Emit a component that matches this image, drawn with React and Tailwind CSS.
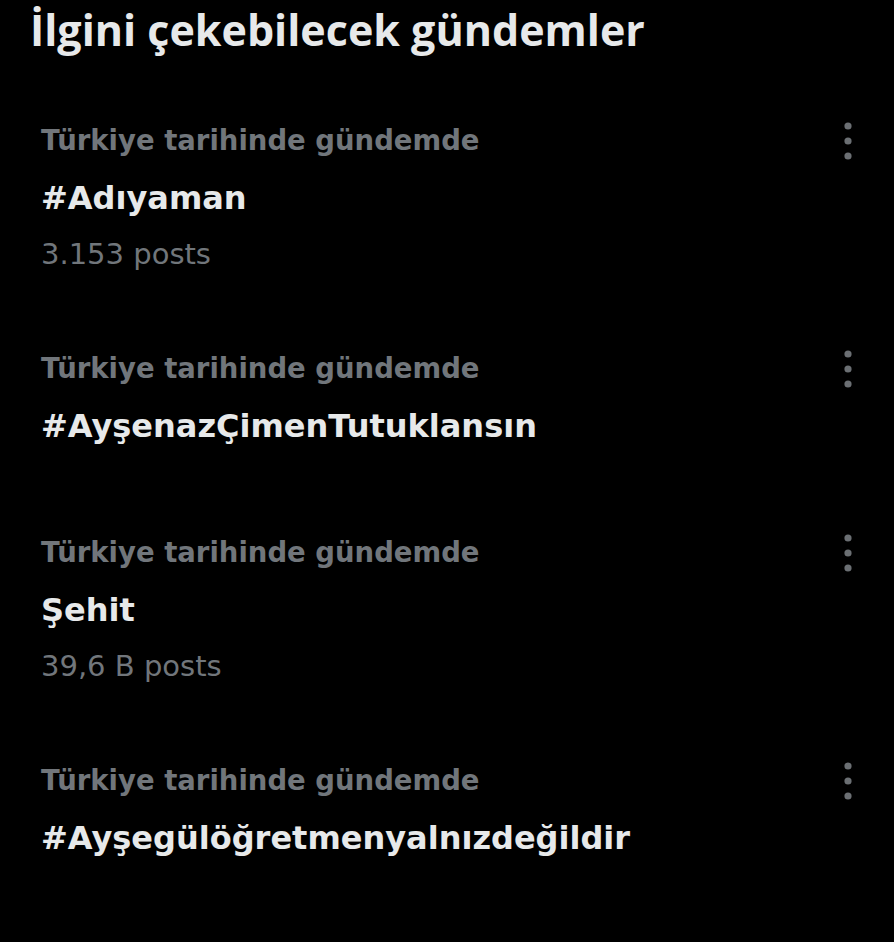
import React from "react";

const items = [
  { label: "Türkiye tarihinde gündemde", trend: "#Adıyaman", posts: "3.153 posts" },
  { label: "Türkiye tarihinde gündemde", trend: "#AyşenazÇimenTutuklansın" },
  { label: "Türkiye tarihinde gündemde", trend: "Şehit", posts: "39,6 B posts" },
  { label: "Türkiye tarihinde gündemde", trend: "#Ayşegülöğretmenyalnızdeğildir" },
];

function Dots() {
  return (
    <svg width="12" height="40" viewBox="0 0 12 40" className="block">
      <circle cx="6" cy="5" r="3.6" fill="#6b6f73" />
      <circle cx="6" cy="20" r="3.6" fill="#6b6f73" />
      <circle cx="6" cy="35" r="3.6" fill="#6b6f73" />
    </svg>
  );
}

export default function App() {
  return (
    <div className="w-[894px] h-[942px] bg-black overflow-hidden">
      <h1 className="pl-[30px] h-[60px] leading-[60px] text-[43px] font-bold text-[#e7e9ea]" style={{ fontFamily: '"Open Sans", "Noto Sans", sans-serif' }}>
        İlgini çekebilecek gündemler
      </h1>
      <div className="pt-[52px] pl-[41px] pr-[40px]" style={{ fontFamily: '"DejaVu Sans", "Noto Sans", sans-serif' }}>
        {items.map((it, i) => (
          <div key={i} className={it.posts ? "mb-[57px]" : "mb-[70px]"}>
            <div className="flex items-center justify-between h-[57px]">
              <span className="text-[27.5px] font-bold text-[#71767b]">{it.label}</span>
              <Dots />
            </div>
            <div className="h-[57px] flex items-center text-[32px] font-bold text-[#e7e9ea]">{it.trend}</div>
            {it.posts && (
              <div className="h-[57px] flex items-center text-[29px] text-[#71767b]">{it.posts}</div>
            )}
          </div>
        ))}
      </div>
    </div>
  );
}
